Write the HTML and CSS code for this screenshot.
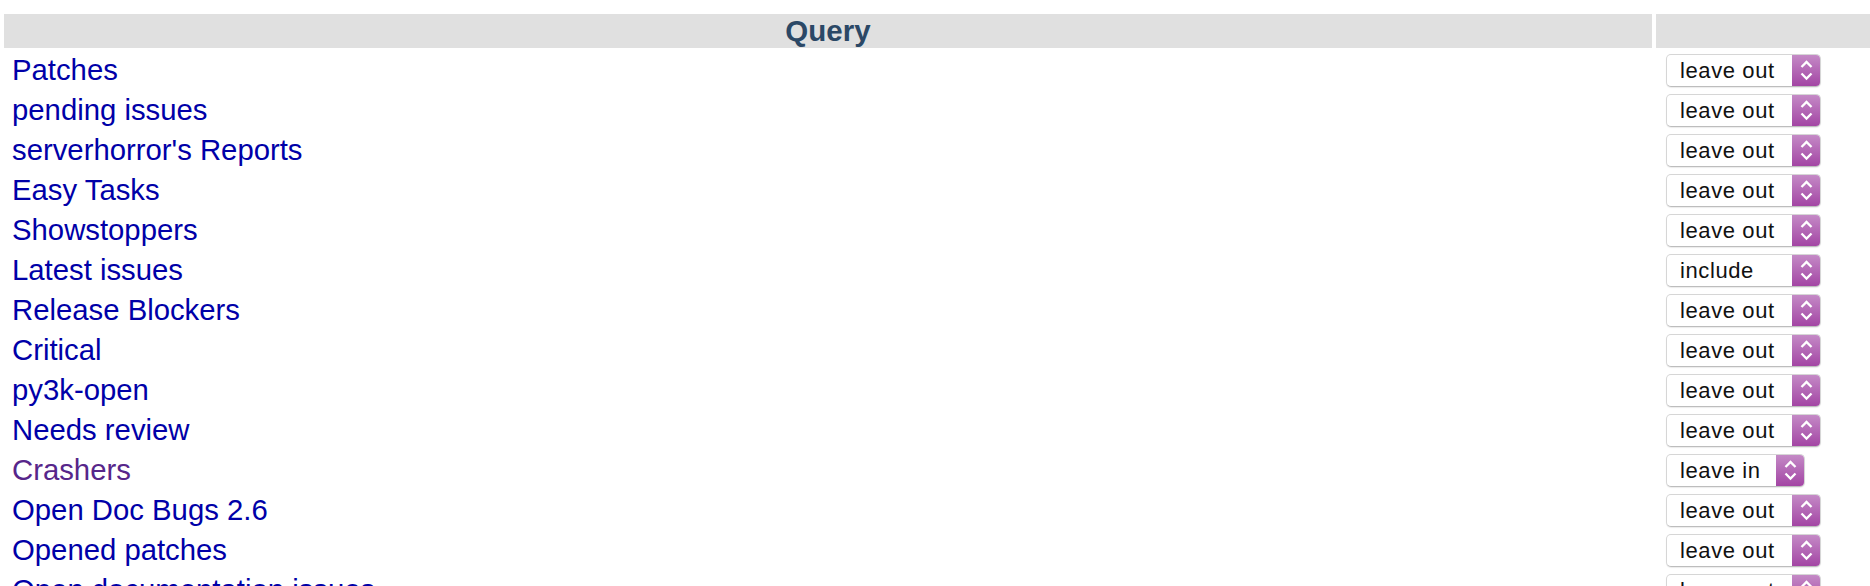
FILE: index.html
```html
<!DOCTYPE html>
<html>
<head>
<meta charset="utf-8">
<link rel="stylesheet" href="styles.css">
</head>
<body>
<table class="queries">
  <colgroup><col class="col-name"><col class="col-action"></colgroup>
  <thead>
    <tr><th>Query</th><th></th></tr>
  </thead>
  <tbody>
    <tr><td class="name"><a href="#">Patches</a></td><td class="action"><div class="sel"><span class="val">leave out</span><span class="arr"><svg viewBox="0 0 29 33" width="29" height="33"><polyline points="9.5,13 14.5,8 19.5,13"/><polyline points="9.5,19.5 14.5,24.5 19.5,19.5"/></svg></span></div></td></tr>
    <tr><td class="name"><a href="#">pending issues</a></td><td class="action"><div class="sel"><span class="val">leave out</span><span class="arr"><svg viewBox="0 0 29 33" width="29" height="33"><polyline points="9.5,13 14.5,8 19.5,13"/><polyline points="9.5,19.5 14.5,24.5 19.5,19.5"/></svg></span></div></td></tr>
    <tr><td class="name"><a href="#">serverhorror's Reports</a></td><td class="action"><div class="sel"><span class="val">leave out</span><span class="arr"><svg viewBox="0 0 29 33" width="29" height="33"><polyline points="9.5,13 14.5,8 19.5,13"/><polyline points="9.5,19.5 14.5,24.5 19.5,19.5"/></svg></span></div></td></tr>
    <tr><td class="name"><a href="#">Easy Tasks</a></td><td class="action"><div class="sel"><span class="val">leave out</span><span class="arr"><svg viewBox="0 0 29 33" width="29" height="33"><polyline points="9.5,13 14.5,8 19.5,13"/><polyline points="9.5,19.5 14.5,24.5 19.5,19.5"/></svg></span></div></td></tr>
    <tr><td class="name"><a href="#">Showstoppers</a></td><td class="action"><div class="sel"><span class="val">leave out</span><span class="arr"><svg viewBox="0 0 29 33" width="29" height="33"><polyline points="9.5,13 14.5,8 19.5,13"/><polyline points="9.5,19.5 14.5,24.5 19.5,19.5"/></svg></span></div></td></tr>
    <tr><td class="name"><a href="#">Latest issues</a></td><td class="action"><div class="sel"><span class="val">include</span><span class="arr"><svg viewBox="0 0 29 33" width="29" height="33"><polyline points="9.5,13 14.5,8 19.5,13"/><polyline points="9.5,19.5 14.5,24.5 19.5,19.5"/></svg></span></div></td></tr>
    <tr><td class="name"><a href="#">Release Blockers</a></td><td class="action"><div class="sel"><span class="val">leave out</span><span class="arr"><svg viewBox="0 0 29 33" width="29" height="33"><polyline points="9.5,13 14.5,8 19.5,13"/><polyline points="9.5,19.5 14.5,24.5 19.5,19.5"/></svg></span></div></td></tr>
    <tr><td class="name"><a href="#">Critical</a></td><td class="action"><div class="sel"><span class="val">leave out</span><span class="arr"><svg viewBox="0 0 29 33" width="29" height="33"><polyline points="9.5,13 14.5,8 19.5,13"/><polyline points="9.5,19.5 14.5,24.5 19.5,19.5"/></svg></span></div></td></tr>
    <tr><td class="name"><a href="#">py3k-open</a></td><td class="action"><div class="sel"><span class="val">leave out</span><span class="arr"><svg viewBox="0 0 29 33" width="29" height="33"><polyline points="9.5,13 14.5,8 19.5,13"/><polyline points="9.5,19.5 14.5,24.5 19.5,19.5"/></svg></span></div></td></tr>
    <tr><td class="name"><a href="#">Needs review</a></td><td class="action"><div class="sel"><span class="val">leave out</span><span class="arr"><svg viewBox="0 0 29 33" width="29" height="33"><polyline points="9.5,13 14.5,8 19.5,13"/><polyline points="9.5,19.5 14.5,24.5 19.5,19.5"/></svg></span></div></td></tr>
    <tr><td class="name"><a href="#" class="visited">Crashers</a></td><td class="action"><div class="sel sel-short"><span class="val">leave in</span><span class="arr"><svg viewBox="0 0 29 33" width="29" height="33"><polyline points="9.5,13 14.5,8 19.5,13"/><polyline points="9.5,19.5 14.5,24.5 19.5,19.5"/></svg></span></div></td></tr>
    <tr><td class="name"><a href="#">Open Doc Bugs 2.6</a></td><td class="action"><div class="sel"><span class="val">leave out</span><span class="arr"><svg viewBox="0 0 29 33" width="29" height="33"><polyline points="9.5,13 14.5,8 19.5,13"/><polyline points="9.5,19.5 14.5,24.5 19.5,19.5"/></svg></span></div></td></tr>
    <tr><td class="name"><a href="#">Opened patches</a></td><td class="action"><div class="sel"><span class="val">leave out</span><span class="arr"><svg viewBox="0 0 29 33" width="29" height="33"><polyline points="9.5,13 14.5,8 19.5,13"/><polyline points="9.5,19.5 14.5,24.5 19.5,19.5"/></svg></span></div></td></tr>
    <tr><td class="name"><a href="#">Open documentation issues</a></td><td class="action"><div class="sel"><span class="val">leave out</span><span class="arr"><svg viewBox="0 0 29 33" width="29" height="33"><polyline points="9.5,13 14.5,8 19.5,13"/><polyline points="9.5,19.5 14.5,24.5 19.5,19.5"/></svg></span></div></td></tr>
  </tbody>
</table>
</body>
</html>
```

FILE: styles.css
```css
html, body {
  margin: 0;
  padding: 0;
  background: #ffffff;
  overflow: hidden;
}

body {
  font-family: "Liberation Sans", Arial, Helvetica, sans-serif;
}

.queries {
  margin-top: 10px;
  width: 1920px;
  table-layout: fixed;
  border-collapse: separate;
  border-spacing: 4px;
}

.col-name {
  width: 1648px;
}

.queries th {
  background: #e0e0e0;
  height: 34px;
  padding: 0;
  font-size: 29.5px;
  font-weight: bold;
  color: #2b4866;
  text-align: center;
  vertical-align: middle;
  line-height: 32px;
}

.queries td {
  padding: 1px 6px;
  height: 34px;
  vertical-align: middle;
}

.queries td.name {
  padding-left: 8px;
}

.name a {
  font-size: 29.3px;
  color: #0000a8;
  text-decoration: none;
  white-space: nowrap;
}

.name a.visited {
  color: #57268a;
}

.sel {
  display: flex;
  align-items: stretch;
  width: 155px;
  height: 33px;
  margin-left: 4px;
  box-sizing: border-box;
  border: 1px solid #d6d6d6;
  border-bottom-color: #bdbdbd;
  border-radius: 5px;
  background: #ffffff;
  box-shadow: 0 1px 1px rgba(0, 0, 0, 0.08);
  overflow: hidden;
}

.sel-short {
  width: 139px;
}

.val {
  flex: 1;
  padding-left: 13px;
  font-size: 22px;
  letter-spacing: 0.6px;
  line-height: 31px;
  color: #111111;
  white-space: nowrap;
}

.arr {
  width: 29px;
  flex: none;
  display: flex;
  align-items: center;
  justify-content: center;
  margin: -1px -1px -1px 0;
  background: linear-gradient(#c58cc7, #a243a3);
  border-radius: 0 5px 5px 0;
}

.arr svg {
  display: block;
  fill: none;
  stroke: #ffffff;
  stroke-width: 2.3;
}
```
